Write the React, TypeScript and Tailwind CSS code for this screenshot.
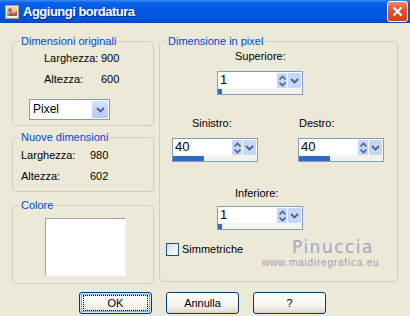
import React from "react";

function SpinBox({ value, fill }: { value: string; fill: number }) {
  return (
    <div className="w-[86px] h-[24px] border border-[#7F9DB9] bg-white flex flex-col">
      <div className="flex h-[16px] items-center">
        <span className="flex-1 pl-[2px] text-[13px] leading-[16px] text-black">{value}</span>
        <div className="w-[10px] h-[15px] mt-[1px] bg-[#C6D6FA] flex items-center justify-center rounded-[1px]">
          <svg width="9" height="14" viewBox="0 0 9 14">
            <path d="M1.5 5.5 L4.5 2.5 L7.5 5.5" stroke="#4D6185" strokeWidth="1.6" fill="none" />
            <path d="M1.5 8.5 L4.5 11.5 L7.5 8.5" stroke="#4D6185" strokeWidth="1.6" fill="none" />
          </svg>
        </div>
        <div className="w-[13px] h-[15px] mt-[1px] ml-[1px] mr-[1px] bg-[#C6D6FA] flex items-center justify-center rounded-[1px]">
          <svg width="11" height="11" viewBox="0 0 11 11">
            <path d="M2 4 L5.5 7.5 L9 4" stroke="#4D6185" strokeWidth="1.8" fill="none" />
          </svg>
        </div>
      </div>
      <div className="h-[6px] bg-[#F3F2EC] pt-[1px] flex">
        <div className="h-full bg-[#316AC5]" style={{ width: fill }} />
      </div>
    </div>
  );
}

function Group({
  label,
  className,
  children,
}: {
  label: string;
  className: string;
  children?: React.ReactNode;
}) {
  return (
    <fieldset className={`border border-[#D0D0BF] rounded-[4px] m-0 p-0 min-w-0 ${className}`}>
      <legend className="ml-[6px] px-[2px] text-[11px] leading-[14px] text-[#0046D5]">{label}</legend>
      {children}
    </fieldset>
  );
}

function XPButton({ label, focus }: { label: string; focus?: boolean }) {
  return (
    <div
      className={`w-[73px] h-[22px] rounded-[3px] border border-[#003C74] bg-[linear-gradient(to_bottom,#FFFFFF_0%,#F5F4EF_60%,#E3E0D6_90%,#D6D0C5_100%)] flex items-center justify-center text-[11px] text-black ${
        focus ? "shadow-[inset_0_0_0_1px_#CEE7FF,inset_0_0_0_2px_#89ADE4]" : ""
      }`}
    >
      {focus ? (
        <div className="w-[65px] h-[16px] border border-dotted border-black flex items-center justify-center">
          {label}
        </div>
      ) : (
        label
      )}
    </div>
  );
}

export default function App() {
  return (
    <div className="relative w-[410px] h-[316px] bg-[#ECE9D8] flex flex-col font-['Liberation_Sans',Arial,sans-serif] overflow-hidden">
      {/* Title bar */}
      <div className="h-[23px] flex items-center bg-[linear-gradient(to_bottom,#3D8BF0_0%,#0A62E8_12%,#0058E6_45%,#0055E0_80%,#0546C4_100%)]">
        <div className="ml-[4px] w-[16px] h-[16px]">
          <svg width="16" height="16" viewBox="0 0 16 16">
            <rect x="1.5" y="1.5" width="13" height="13" fill="#F4F1EA" stroke="#A89C88" />
            <rect x="3" y="3" width="10" height="9" fill="#D9A27A" />
            <rect x="3" y="3" width="10" height="4" fill="#EBC9A8" />
            <circle cx="6" cy="6" r="1.8" fill="#C0503A" />
            <path d="M3 12 L7 8 L10 10 L13 7 L13 12 Z" fill="#8A6A4A" />
          </svg>
        </div>
        <span className="ml-[3px] text-[13px] font-bold text-white tracking-[-0.5px] [text-shadow:1px_1px_0_#0A2A8A]">
          Aggiungi bordatura
        </span>
        <div className="ml-auto mr-[2px] w-[21px] h-[21px] rounded-[3px] border border-white bg-[linear-gradient(to_bottom,#F08A6A_0%,#E2562F_40%,#D43E16_100%)] flex items-center justify-center">
          <svg width="13" height="13" viewBox="0 0 13 13">
            <path d="M2.5 2.5 L10.5 10.5 M10.5 2.5 L2.5 10.5" stroke="white" strokeWidth="2.2" />
          </svg>
        </div>
      </div>

      {/* Content */}
      <div className="flex mt-[11px] ml-[12px]">
        {/* Left column */}
        <div className="w-[142px] flex flex-col">
          <Group label="Dimensioni originali" className="h-[92px]">
            <div className="flex flex-col pl-[31px] pt-[4px] text-[11px] leading-[13px] text-black">
              <div className="flex">
                <span className="w-[57px]">Larghezza:</span>
                <span>900</span>
              </div>
              <div className="flex mt-[8px]">
                <span className="w-[57px]">Altezza:</span>
                <span>600</span>
              </div>
              <div className="mt-[13px] -ml-[15px] w-[81px] h-[21px] border border-[#7F9DB9] bg-white flex items-center">
                <span className="flex-1 pl-[3px] text-[12px]">Pixel</span>
                <div className="w-[16px] h-[17px] mr-[1px] rounded-[2px] bg-[linear-gradient(to_bottom,#D6E3FD,#B4C8F6)] flex items-center justify-center">
                  <svg width="11" height="11" viewBox="0 0 11 11">
                    <path d="M2 4 L5.5 7.5 L9 4" stroke="#4D6185" strokeWidth="1.8" fill="none" />
                  </svg>
                </div>
              </div>
            </div>
          </Group>

          <Group label="Nuove dimensioni" className="h-[62px] mt-[4px]">
            <div className="flex flex-col pl-[8px] pt-[5px] text-[11px] leading-[13px] text-black">
              <div className="flex">
                <span className="w-[69px]">Larghezza:</span>
                <span>980</span>
              </div>
              <div className="flex mt-[8px]">
                <span className="w-[69px]">Altezza:</span>
                <span>602</span>
              </div>
            </div>
          </Group>

          <Group label="Colore" className="h-[86px] mt-[6px]">
            <div className="ml-[32px] mt-[6px] w-[81px] h-[58px] bg-white border-t border-l border-[#A0A0A0] border-r border-b border-r-[#F4F4F0] border-b-[#F4F4F0]" />
          </Group>
        </div>

        {/* Right column */}
        <Group label="Dimensione in pixel" className="ml-[5px] w-[239px] h-[248px]">
          <div className="flex flex-col text-[11px] leading-[13px] text-black">
            <span className="ml-[75px] mt-[2px]">Superiore:</span>
            <div className="ml-[57px] mt-[8px]">
              <SpinBox value="1" fill={4} />
            </div>

            <div className="flex mt-[22px] ml-[12px]">
              <div className="flex flex-col w-[86px]">
                <span className="ml-[20px]">Sinistro:</span>
                <div className="mt-[8px]">
                  <SpinBox value="40" fill={31} />
                </div>
              </div>
              <div className="flex flex-col w-[86px] ml-[40px]">
                <span className="ml-[1px]">Destro:</span>
                <div className="mt-[8px]">
                  <SpinBox value="40" fill={31} />
                </div>
              </div>
            </div>

            <span className="ml-[75px] mt-[25px]">Inferiore:</span>
            <div className="ml-[57px] mt-[6px]">
              <SpinBox value="1" fill={4} />
            </div>

            <div className="flex items-center ml-[6px] mt-[13px]">
              <div className="w-[13px] h-[13px] border border-[#1C5180] bg-[linear-gradient(135deg,#DCDCD7,#FFFFFF)]" />
              <span className="ml-[3px]">Simmetriche</span>
            </div>
          </div>
        </Group>
      </div>

      {/* Buttons */}
      <div className="flex ml-[79px] mt-[8px] gap-[14px]">
        <XPButton label="OK" focus />
        <XPButton label="Annulla" />
        <XPButton label="?" />
      </div>

      {/* Watermark */}
      <span className="absolute left-[292px] top-[237px] text-[17px] leading-[20px] tracking-[1.5px] text-[#A8A8BC] font-['DejaVu_Sans',sans-serif] [text-shadow:0_0_1px_#D8D8E4]">
        Pinuccia
      </span>
      <span className="absolute left-[262px] top-[257px] text-[10px] leading-[12px] tracking-[0.8px] text-[#9C9CAE]">
        www.maidiregrafica.eu
      </span>
    </div>
  );
}
